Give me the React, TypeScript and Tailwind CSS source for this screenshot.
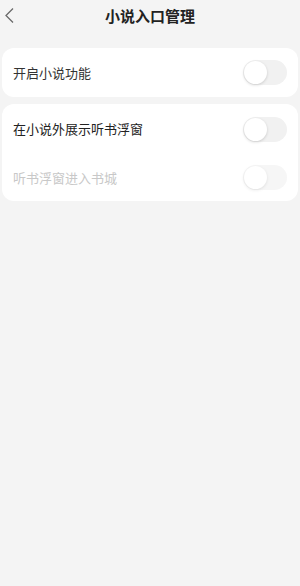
import React from "react";

const Toggle = ({ disabled = false }: { disabled?: boolean }) => (
  <div className={`relative w-[44px] h-[25px] rounded-full bg-[#f1f1f1] ${disabled ? "opacity-60" : ""}`}>
    <div className="absolute left-[1px] top-[1px] w-[23px] h-[23px] rounded-full bg-white shadow-[0_1px_3px_rgba(0,0,0,0.16)]" />
  </div>
);

export default function App() {
  return (
    <div
      className="w-[300px] h-[586px] bg-[#f4f4f4] flex flex-col"
      style={{ fontFamily: '"Noto Sans CJK SC", "Noto Sans", sans-serif' }}
    >
      <div className="relative h-[48px] flex items-start justify-center pt-[4px]">
        <svg className="absolute left-[4px] top-[7px]" width="11" height="17" viewBox="0 0 11 17" fill="none">
          <path d="M9 1.5 L2 8.5 L9 15.5" stroke="#6a6a6a" strokeWidth="1.3" />
        </svg>
        <span className="text-[15px] font-bold text-[#222] leading-[24px]">小说入口管理</span>
      </div>
      <div className="mx-[2px] rounded-[12px] bg-white h-[49px] flex items-center justify-between pl-[11px] pr-[11px]">
        <span className="text-[13px] text-[#333]">开启小说功能</span>
        <Toggle />
      </div>
      <div className="mx-[2px] mt-[7px] rounded-[12px] bg-white flex flex-col">
        <div className="h-[50px] flex items-center justify-between pl-[11px] pr-[11px]">
          <span className="text-[13px] text-[#222]">在小说外展示听书浮窗</span>
          <Toggle />
        </div>
        <div className="h-[47px] flex items-center justify-between pl-[11px] pr-[11px]">
          <span className="text-[13px] text-[#c8c8c8]">听书浮窗进入书城</span>
          <Toggle disabled />
        </div>
      </div>
    </div>
  );
}
